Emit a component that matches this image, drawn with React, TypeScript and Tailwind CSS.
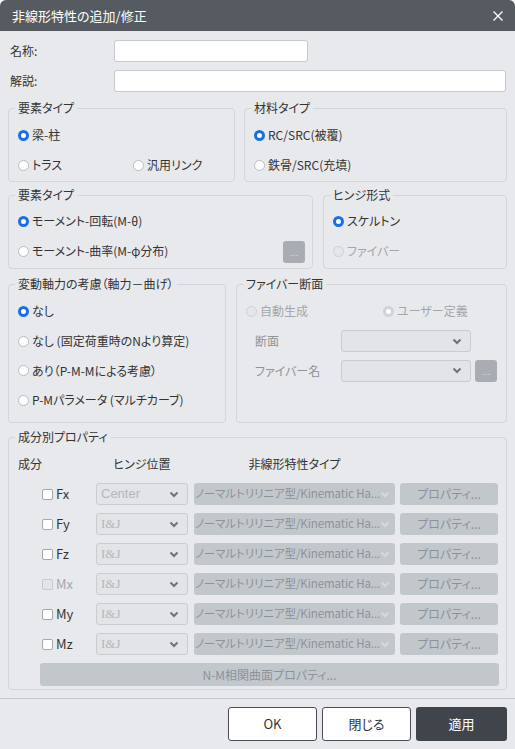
import React from "react";

function Radio({ checked = false, disabled = false }: { checked?: boolean; disabled?: boolean }) {
  if (checked && !disabled)
    return <span className="block w-[11px] h-[11px] rounded-full border-[3px] border-[#1a6fe8] bg-white shrink-0" />;
  if (checked && disabled)
    return <span className="block w-[11px] h-[11px] rounded-full border-[3px] border-[#cfd2d6] bg-white shrink-0" />;
  if (disabled)
    return <span className="block w-[11px] h-[11px] rounded-full border border-[#cdd0d4] bg-[#e4e6e9] shrink-0" />;
  return <span className="block w-[11px] h-[11px] rounded-full border border-[#b8bbc0] bg-white shrink-0" />;
}

function RadioItem({ label, checked, disabled }: { label: string; checked?: boolean; disabled?: boolean }) {
  return (
    <div className="flex items-center gap-[3px]">
      <Radio checked={checked} disabled={disabled} />
      <span className={disabled ? "text-[#a3a6ab]" : "text-[#333]"}>{label}</span>
    </div>
  );
}

function Group({ title, className, children }: { title: string; className: string; children: React.ReactNode }) {
  return (
    <fieldset className={`border border-[#d3d5d9] rounded-[4px] pl-[6px] pr-[7px] shrink-0 ${className}`}>
      <legend className="px-[3px] leading-[16px] text-[#333]">{title}</legend>
      {children}
    </fieldset>
  );
}

function Chevron({ color }: { color: string }) {
  return (
    <svg width="10" height="7" viewBox="0 0 10 7" className="shrink-0">
      <polyline points="1.5,1.5 5,5 8.5,1.5" fill="none" stroke={color} strokeWidth="2" />
    </svg>
  );
}

function Dots({ className }: { className: string }) {
  return (
    <div className={`w-[22px] h-[22px] rounded-[3px] bg-[#a9adb3] flex items-center justify-center text-[#d5d8dc] text-[10px] leading-none shrink-0 ${className}`}>
      ...
    </div>
  );
}

function LightSelect({ value, serif, className }: { value: string; serif?: boolean; className: string }) {
  return (
    <div className={`h-[22px] rounded-[3px] border border-[#c9ccd0] bg-[#e2e4e7] flex items-center justify-between pl-[4px] pr-[8px] shrink-0 ${className}`}>
      <span
        className={
          serif
            ? "text-[#b4b7bb] font-['Liberation_Serif',serif] text-[13px]"
            : "text-[#b4b7bb] font-['Liberation_Sans',sans-serif] text-[13px]"
        }
      >
        {value}
      </span>
      <Chevron color="#6f7379" />
    </div>
  );
}

const rows = [
  { name: "Fx", pos: "Center", disabled: false },
  { name: "Fy", pos: "I&J", disabled: false },
  { name: "Fz", pos: "I&J", disabled: false },
  { name: "Mx", pos: "I&J", disabled: true },
  { name: "My", pos: "I&J", disabled: false },
  { name: "Mz", pos: "I&J", disabled: false },
];

export default function App() {
  return (
    <div className="w-[515px] h-[749px] bg-white">
      <div className="w-[515px] h-[749px] bg-[#e8e9ec] rounded-t-[6px] overflow-hidden flex flex-col text-[12px] text-[#333] font-['Noto_Sans_CJK_JP','Noto_Sans',sans-serif] [font-feature-settings:'palt']">
        {/* Title bar */}
        <div className="h-[31px] bg-[#565b62] flex items-center justify-between pl-[12px] pr-[11px] shrink-0">
          <span className="text-white text-[13px]">非線形特性の追加/修正</span>
          <svg width="12" height="12" viewBox="0 0 12 12">
            <path d="M1.5 1.5 L10.5 10.5 M10.5 1.5 L1.5 10.5" stroke="#ffffff" strokeWidth="1.3" />
          </svg>
        </div>

        {/* Body */}
        <div className="px-[8px] pt-[9px] flex flex-col">
          <div className="flex items-center h-[22px]">
            <span className="w-[106px] pl-[2px]">名称:</span>
            <div className="w-[194px] h-[22px] bg-white border border-[#c6c9cd] rounded-[3px]" />
          </div>
          <div className="flex items-center h-[22px] mt-[8px]">
            <span className="w-[106px] pl-[2px]">解説:</span>
            <div className="w-[392px] h-[22px] bg-white border border-[#c6c9cd] rounded-[3px]" />
          </div>

          {/* Row 1 */}
          <div className="flex gap-[9px] mt-[8px]">
            <Group title="要素タイプ" className="w-[227px] h-[82px]">
              <div className="pl-[3px] pt-[4px]">
                <div className="h-[30px] flex items-center">
                  <RadioItem label="梁-柱" checked />
                </div>
                <div className="h-[30px] flex items-center">
                  <div className="w-[115px]">
                    <RadioItem label="トラス" />
                  </div>
                  <RadioItem label="汎用リンク" />
                </div>
              </div>
            </Group>
            <Group title="材料タイプ" className="w-[263px] h-[82px]">
              <div className="pl-[3px] pt-[4px]">
                <div className="h-[30px] flex items-center">
                  <RadioItem label="RC/SRC(被覆)" checked />
                </div>
                <div className="h-[30px] flex items-center">
                  <RadioItem label="鉄骨/SRC(充填)" />
                </div>
              </div>
            </Group>
          </div>

          {/* Row 2 */}
          <div className="flex gap-[10px] mt-[5px]">
            <Group title="要素タイプ" className="w-[305px] h-[82px]">
              <div className="pl-[3px] pt-[3px]">
                <div className="h-[30px] flex items-center">
                  <RadioItem label="モーメント-回転(M-θ)" checked />
                </div>
                <div className="h-[30px] flex items-center justify-between">
                  <RadioItem label="モーメント-曲率(M-φ分布)" />
                  <Dots className="mt-[2px]" />
                </div>
              </div>
            </Group>
            <Group title="ヒンジ形式" className="w-[184px] h-[82px]">
              <div className="pl-[3px] pt-[3px]">
                <div className="h-[30px] flex items-center">
                  <RadioItem label="スケルトン" checked />
                </div>
                <div className="h-[30px] flex items-center">
                  <RadioItem label="ファイバー" disabled />
                </div>
              </div>
            </Group>
          </div>

          {/* Row 3 */}
          <div className="flex gap-[10px] mt-[7px]">
            <Group title="変動軸力の考慮（軸力－曲げ）" className="w-[218px] h-[147px]">
              <div className="pl-[3px] pt-[4px]">
                <div className="h-[30px] flex items-center">
                  <RadioItem label="なし" checked />
                </div>
                <div className="h-[30px] flex items-center">
                  <RadioItem label="なし (固定荷重時のNより算定)" />
                </div>
                <div className="h-[29px] flex items-center">
                  <RadioItem label="あり（P-M-Mによる考慮）" />
                </div>
                <div className="h-[30px] flex items-center">
                  <RadioItem label="P-Mパラメータ (マルチカーブ)" />
                </div>
              </div>
            </Group>
            <Group title="ファイバー断面" className="w-[271px] h-[147px]">
              <div className="pl-[3px] pt-[4px]">
                <div className="h-[30px] flex items-center">
                  <div className="w-[137px]">
                    <RadioItem label="自動生成" disabled />
                  </div>
                  <RadioItem label="ユーザー定義" checked disabled />
                </div>
                <div className="h-[30px] flex items-center pl-[9px]">
                  <span className="w-[86px] text-[#8f9297]">断面</span>
                  <LightSelect value="" className="w-[130px]" />
                </div>
                <div className="h-[29px] flex items-center pl-[9px]">
                  <span className="w-[86px] text-[#8f9297]">ファイバー名</span>
                  <LightSelect value="" className="w-[130px]" />
                  <Dots className="ml-[4px]" />
                </div>
              </div>
            </Group>
          </div>

          {/* Row 4 */}
          <div className="flex mt-[6px]">
            <Group title="成分別プロパティ" className="w-[499px] h-[261px]">
              <div className="pl-[3px] pt-[4px]">
                <div className="h-[30px] flex items-center">
                  <span className="w-[78px]">成分</span>
                  <span className="w-[92px] text-center">ヒンジ位置</span>
                  <span className="w-[201px] ml-[6px] text-center">非線形特性タイプ</span>
                </div>
                {rows.map((r) => (
                  <div key={r.name} className="h-[30px] flex items-center">
                    <div className="w-[78px] flex items-center pl-[24px] gap-[3px]">
                      <span
                        className={
                          r.disabled
                            ? "block w-[11px] h-[11px] rounded-[2px] border border-[#c6c9cd] bg-[#e3e5e8]"
                            : "block w-[11px] h-[11px] rounded-[2px] border border-[#a4a8ad] bg-white"
                        }
                      />
                      <span className={r.disabled ? "text-[#a3a6ab] text-[13px]" : "text-[#333] text-[13px]"}>{r.name}</span>
                    </div>
                    <LightSelect value={r.pos} serif={r.pos === "I&J"} className="w-[92px]" />
                    <div className="w-[201px] ml-[6px] h-[22px] rounded-[3px] bg-[#c2c7cc] flex items-center justify-between pr-[7px] overflow-hidden">
                      <span className="text-[#8d9298] whitespace-nowrap pl-[1px] text-[11.5px] tracking-[-0.1px]">ノーマルトリリニア型/Kinematic Ha...</span>
                      <Chevron color="#d6d9dd" />
                    </div>
                    <div className="w-[98px] ml-[5px] h-[22px] rounded-[3px] bg-[#c2c7cc] flex items-center justify-center text-[#8d9298]">
                      プロパティ...
                    </div>
                  </div>
                ))}
                <div className="ml-[22px] mt-[4px] w-[459px] h-[23px] rounded-[3px] bg-[#c2c7cc] flex items-center justify-center text-[#8d9298]">
                  N-M相関曲面プロパティ...
                </div>
              </div>
            </Group>
          </div>
        </div>

        {/* Separator */}
        <div className="mt-[8px] h-[1px] bg-[#c5c8cc] shrink-0" />

        {/* Footer */}
        <div className="flex justify-end gap-[5px] pr-[8px] mt-[8px]">
          <button className="w-[89px] h-[34px] bg-white border border-[#4a4e54] rounded-[3px] text-[13px] text-[#333]">OK</button>
          <button className="w-[89px] h-[34px] bg-white border border-[#4a4e54] rounded-[3px] text-[13px] text-[#333]">閉じる</button>
          <button className="w-[91px] h-[34px] bg-[#40454c] rounded-[3px] text-[13px] text-white">適用</button>
        </div>
      </div>
    </div>
  );
}
